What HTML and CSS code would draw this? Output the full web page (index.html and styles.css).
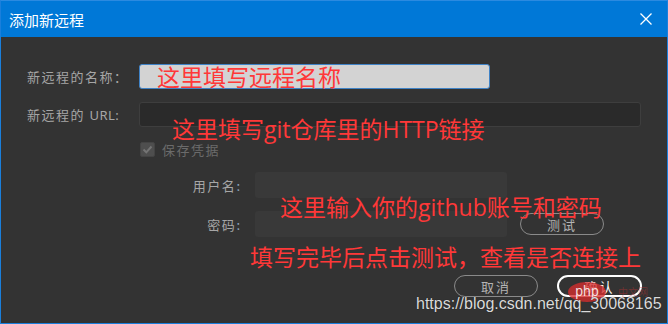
FILE: index.html
```html
<!DOCTYPE html>
<html lang="zh-CN">
<head>
    <meta charset="UTF-8">
    <meta name="viewport" content="width=device-width, initial-scale=1.0">
    <title>添加新远程</title>
    <link rel="stylesheet" href="styles.css">
</head>
<body>
    <div class="window">
        <div class="titlebar">
            <span class="title">添加新远程</span>
            <svg class="close" width="12" height="12" viewBox="0 0 12 12">
                <path d="M0.5 0.5 L11.5 11.5 M11.5 0.5 L0.5 11.5" stroke="#ffffff" stroke-width="1.3" fill="none"/>
            </svg>
        </div>

        <div class="content">
            <div class="row">
                <div class="label">新远程的名称：</div>
                <div class="input input-name"></div>
            </div>
            <div class="row row-url">
                <div class="label">新远程的 <span class="latin">URL:</span></div>
                <div class="input input-url"></div>
            </div>
            <div class="row row-check">
                <div class="checkbox">
                    <svg width="15" height="15" viewBox="0 0 15 15">
                        <path d="M3.5 7.5 L6.3 10.3 L11.5 4.5" stroke="#747474" stroke-width="2" fill="none"/>
                    </svg>
                </div>
                <span class="check-text">保存凭据</span>
            </div>
            <div class="row row-cred">
                <div class="sublabel">用户名<span class="colon">:</span></div>
                <div class="input input-cred"></div>
            </div>
            <div class="row row-cred row-pass">
                <div class="sublabel">密码<span class="colon">:</span></div>
                <div class="input input-cred"></div>
                <button class="btn btn-test">测试</button>
            </div>
            <div class="actions">
                <button class="btn">取消</button>
                <button class="btn btn-ok">确认</button>
            </div>
        </div>

        <!-- 标注文字 -->
        <div class="note note-1">这里填写远程名称</div>
        <div class="note note-2">这里填写git仓库里的HTTP链接</div>
        <div class="note note-3">这里输入你的github账号和密码</div>
        <div class="note note-4">填写完毕后点击测试，查看是否连接上</div>

        <div class="php-logo">php</div>
        <div class="php-cn">中文网</div>
        <div class="watermark">https://blog.csdn.net/qq_30068165</div>
    </div>
</body>
</html>
```

FILE: styles.css
```css
body {
    margin: 0;
    background-color: #333333;
    font-family: "Noto Sans CJK SC", "Noto Sans", sans-serif;
}
.window {
    position: relative;
    width: 668px;
    height: 324px;
    box-sizing: border-box;
    border: 1px solid #1a7fdc;
    border-top-color: #2b8ae0;
    background-color: #333333;
    overflow: hidden;
}
.titlebar {
    height: 36px;
    background-color: #0078d7;
    display: flex;
    align-items: center;
    justify-content: space-between;
    padding: 0 15px 0 8px;
}
.title {
    color: #ffffff;
    font-size: 15px;
    line-height: 1;
}
.close {
    display: block;
}
.content {
    padding: 27px 25px 0 26px;
}
.row {
    display: flex;
    align-items: center;
    height: 25px;
}
.label {
    width: 112px;
    color: #a6a6a6;
    font-size: 13px;
    letter-spacing: 1.5px;
    white-space: nowrap;
}
.latin {
    font-family: "Noto Sans", sans-serif;
    letter-spacing: 0.5px;
}
.input {
    box-sizing: border-box;
    height: 25px;
    border-radius: 3px;
}
.input-name {
    width: 351px;
    background-color: #d3d3d3;
    border: 1px solid #3f82c6;
}
.row-url {
    margin-top: 13px;
}
.input-url {
    width: 502px;
    background-color: #2a2a2a;
    border: 1px solid #3e3e3e;
}
.row-check {
    margin-top: 15px;
    height: 15px;
    padding-left: 113px;
}
.checkbox {
    width: 15px;
    height: 15px;
    box-sizing: border-box;
    border-radius: 2px;
    background-color: #4e4e4e;
    border: 1px solid #444444;
}
.checkbox svg {
    display: block;
    margin: -1px;
}
.check-text {
    margin-left: 7px;
    color: #6b6b6b;
    font-size: 13px;
    letter-spacing: 1.5px;
}
.row-cred {
    margin-top: 15px;
    height: 26px;
}
.row-pass {
    margin-top: 13px;
}
.sublabel {
    width: 213px;
    text-align: right;
    color: #a6a6a6;
    font-size: 13px;
    letter-spacing: 1.5px;
    margin-right: 15px;
}
.colon {
    color: #8fa6bf;
    letter-spacing: 0;
}
.input-cred {
    width: 252px;
    height: 26px;
    background-color: #393939;
}
.btn {
    box-sizing: border-box;
    width: 84px;
    height: 22px;
    border: 1px solid #8a8a8a;
    border-radius: 11px;
    background: transparent;
    color: #b4b4b4;
    font-family: "Noto Sans CJK SC", sans-serif;
    font-size: 13px;
    letter-spacing: 2px;
    padding: 0;
    line-height: 1;
}
.btn-test {
    margin-left: 13px;
}
.actions {
    display: flex;
    justify-content: flex-end;
    gap: 19px;
    margin-top: 38px;
}
.btn-ok {
    width: 85px;
    border: 2px solid #ffffff;
    color: #ffffff;
}
.note {
    position: absolute;
    color: #ff3838;
    font-family: "Open Sans", "Noto Sans CJK SC", sans-serif;
    font-size: 23px;
    line-height: 23px;
    white-space: nowrap;
}
.note-1 {
    left: 156px;
    top: 65px;
}
.note-2 {
    left: 171px;
    top: 117px;
}
.note-3 {
    left: 279px;
    top: 195px;
}
.note-4 {
    left: 249px;
    top: 245px;
}
.php-logo {
    position: absolute;
    left: 567px;
    top: 281px;
    width: 38px;
    height: 20px;
    border-radius: 50%;
    background-color: rgba(214, 45, 45, 0.78);
    color: rgba(255, 255, 255, 0.85);
    font-family: "Liberation Sans", sans-serif;
    font-size: 14px;
    line-height: 19px;
    text-align: center;
}
.php-cn {
    position: absolute;
    left: 617px;
    top: 285px;
    color: rgba(190, 50, 50, 0.45);
    font-size: 10px;
    line-height: 12px;
}
.watermark {
    position: absolute;
    left: 415px;
    top: 294px;
    color: #dadada;
    font-family: "Liberation Sans", sans-serif;
    font-size: 16px;
    line-height: 18px;
    text-shadow: 0 0 1px rgba(0, 0, 0, 0.6);
}
```
